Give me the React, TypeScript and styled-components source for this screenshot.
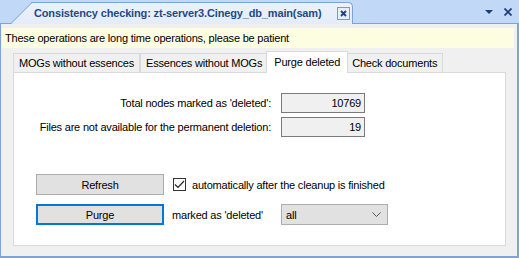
import styled, { createGlobalStyle } from 'styled-components'

const GlobalStyle = createGlobalStyle`
  body {
    margin: 0;
    background: #c1d8f6;
    font-family: 'Liberation Sans', Arial, sans-serif;
  }
`

const Window = styled.div`
  width: 519px;
  height: 258px;
  display: flex;
  flex-direction: column;
  background: #c1d8f6;
`

const TitleBar = styled.div`
  height: 24px;
  box-sizing: border-box;
  display: flex;
  align-items: flex-end;
  padding-left: 31px;
  border-bottom: 1px solid #7ea3d8;
`

const DocTab = styled.div`
  position: relative;
  width: 322px;
  height: 22px;
  margin-bottom: -1px;
  box-sizing: border-box;
  display: flex;
  align-items: center;
  padding: 0 2px 1px 3px;
  background: linear-gradient(#eaf2fc, #e3ecf8);
  border: 1px solid #7ea3d8;
  border-left: none;
  border-bottom: none;
  border-radius: 0 5px 0 0;

  &::before {
    content: '';
    position: absolute;
    left: -21px;
    top: -1px;
    bottom: 0;
    width: 26px;
    background: linear-gradient(#eaf2fc, #e3ecf8);
    border-left: 1px solid #7ea3d8;
    border-top: 1px solid #7ea3d8;
    transform: skewX(-45deg);
    transform-origin: bottom left;
  }
`

const DocTitle = styled.span`
  position: relative;
  flex: 1;
  font-size: 11px;
  font-weight: bold;
  letter-spacing: -0.15px;
  color: #1f4a86;
  white-space: nowrap;
`

const TabClose = styled.span`
  position: relative;
  width: 11px;
  height: 11px;
  border: 1px solid #7b98c6;
  background: #e6eefa;
  display: flex;
  align-items: center;
  justify-content: center;
`

const WindowControls = styled.div`
  margin-left: auto;
  align-self: stretch;
  display: flex;
  align-items: center;
  gap: 11px;
  padding-right: 7px;
`

const Body = styled.div`
  flex: 1;
  display: flex;
  flex-direction: column;
  background: #f0f0f0;
  border-left: 1px solid #7ea3d8;
  border-right: 2px solid #7ea3d8;
  border-bottom: 2px solid #7ea3d8;
  padding: 4px 3px 0 1px;
  font-size: 11px;
  letter-spacing: -0.2px;
  color: #000;
`

const InfoBar = styled.div`
  height: 20px;
  line-height: 20px;
  padding-left: 3px;
  background: #fdfde2;
`

const TabStrip = styled.div`
  display: flex;
  align-items: flex-end;
  height: 21px;
  margin-top: 3px;
  padding-left: 11px;
`

const Tab = styled.div<{ $active?: boolean }>`
  position: relative;
  box-sizing: border-box;
  height: ${p => (p.$active ? '22px' : '19px')};
  margin: ${p => (p.$active ? '0 -2px -1px -2px' : '0')};
  padding: ${p => (p.$active ? '4px 7px 0' : '3px 5px 0')};
  background: ${p => (p.$active ? '#fff' : '#f0f0f0')};
  border: 1px solid #d9d9d9;
  border-bottom: none;
  z-index: ${p => (p.$active ? 1 : 0)};
  white-space: nowrap;

  & + & {
    border-left: ${p => (p.$active ? '1px solid #d9d9d9' : 'none')};
  }
`

const Panel = styled.div`
  flex: 1;
  margin: 0 8px 10px 11px;
  background: #fff;
  border: 1px solid #d9d9d9;
  padding: 20px 0 0 0;
  display: flex;
  flex-direction: column;
`

const Stats = styled.div`
  display: grid;
  grid-template-columns: 257px 84px;
  column-gap: 10px;
  row-gap: 4px;
  align-items: center;
`

const StatLabel = styled.span`
  text-align: right;
`

const StatValue = styled.div`
  height: 20px;
  box-sizing: border-box;
  border: 1px solid #7a7a7a;
  background: #f0f0f0;
  text-align: right;
  line-height: 18px;
  padding-right: 3px;
`

const Actions = styled.div`
  margin-top: 37px;
  padding-left: 22px;
  display: flex;
  flex-direction: column;
  gap: 9px;
`

const ActionRow = styled.div`
  display: flex;
  align-items: center;
`

const Button = styled.button<{ $focused?: boolean }>`
  width: 128px;
  height: 21px;
  box-sizing: border-box;
  margin: 0;
  padding: 0;
  background: #e1e1e1;
  border: ${p => (p.$focused ? '2px solid #0078d7' : '1px solid #adadad')};
  font: inherit;
  letter-spacing: inherit;
  color: #000;
`

const Check = styled.span`
  width: 13px;
  height: 13px;
  box-sizing: border-box;
  margin: 0 6px 0 9px;
  border: 1px solid #333;
  background: #fff;
  display: flex;
  align-items: center;
  justify-content: center;
`

const InlineLabel = styled.span<{ $width?: number }>`
  width: ${p => (p.$width ? `${p.$width}px` : 'auto')};
  margin-left: ${p => (p.$width ? '8px' : '0')};
`

const Select = styled.div`
  width: 107px;
  height: 21px;
  box-sizing: border-box;
  border: 1px solid #adadad;
  background: #e1e1e1;
  display: flex;
  align-items: center;
  justify-content: space-between;
  padding: 0 6px 0 4px;
`

export default function App() {
  return (
    <Window>
      <GlobalStyle />
      <TitleBar>
        <DocTab>
          <DocTitle>Consistency checking: zt-server3.Cinegy_db_main(sam)</DocTitle>
          <TabClose>
            <svg width="7" height="7" viewBox="0 0 7 7">
              <path d="M1 1L6 6M6 1L1 6" stroke="#1d3f7a" strokeWidth="1.8" />
            </svg>
          </TabClose>
        </DocTab>
        <WindowControls>
          <svg width="8" height="4" viewBox="0 0 8 4">
            <path d="M0 0H8L4 4Z" fill="#1d3f7a" />
          </svg>
          <svg width="8" height="8" viewBox="0 0 8 8">
            <path d="M0.5 0.5L7.5 7.5M7.5 0.5L0.5 7.5" stroke="#1d3f7a" strokeWidth="1.8" />
          </svg>
        </WindowControls>
      </TitleBar>
      <Body>
        <InfoBar>These operations are long time operations, please be patient</InfoBar>
        <TabStrip>
          <Tab>MOGs without essences</Tab>
          <Tab>Essences without MOGs</Tab>
          <Tab $active>Purge deleted</Tab>
          <Tab>Check documents</Tab>
        </TabStrip>
        <Panel>
          <Stats>
            <StatLabel>Total nodes marked as 'deleted':</StatLabel>
            <StatValue>10769</StatValue>
            <StatLabel>Files are not available for the permanent deletion:</StatLabel>
            <StatValue>19</StatValue>
          </Stats>
          <Actions>
            <ActionRow>
              <Button>Refresh</Button>
              <Check>
                <svg width="11" height="9" viewBox="0 0 11 9">
                  <path d="M1 4.5L4 7.5L10 1" stroke="#222" strokeWidth="1.2" fill="none" />
                </svg>
              </Check>
              <span>automatically after the cleanup is finished</span>
            </ActionRow>
            <ActionRow>
              <Button $focused>Purge</Button>
              <InlineLabel $width={109}>marked as 'deleted'</InlineLabel>
              <Select>
                <span>all</span>
                <svg width="9" height="5" viewBox="0 0 9 5">
                  <path d="M0.5 0.5L4.5 4.5L8.5 0.5" stroke="#555" fill="none" />
                </svg>
              </Select>
            </ActionRow>
          </Actions>
        </Panel>
      </Body>
    </Window>
  )
}
